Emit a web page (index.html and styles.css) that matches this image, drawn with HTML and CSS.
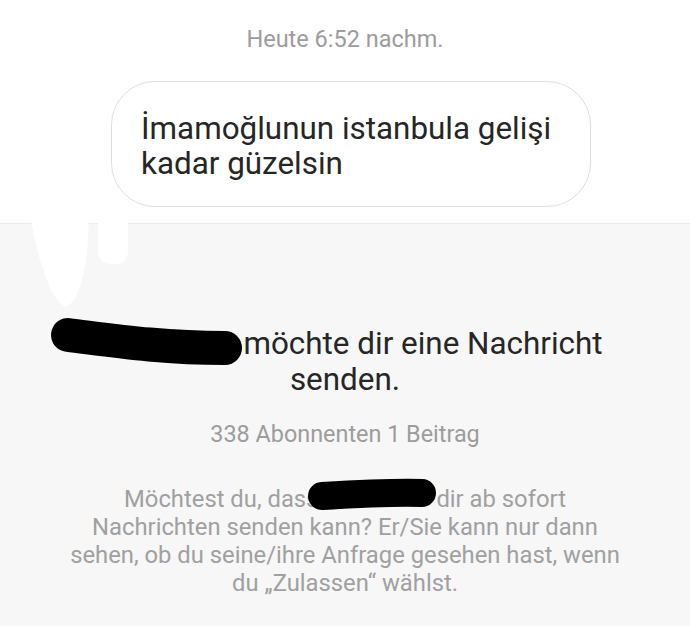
FILE: index.html
```html
<!DOCTYPE html>
<html>
	<head>
		<meta charset="UTF-8">
		<link rel="stylesheet" href="styles.css">
	</head>
	<body>
		<div class="thread">
			<div class="timestamp">Heute 6:52 nachm.</div>
			<div class="bubble">İmamoğlunun istanbula gelişi<br>kadar güzelsin</div>
		</div>

		<div class="request">
			<div class="requestTitle"><svg class="scribble nameScribble" width="196" height="30" viewBox="0 0 196 30"><path d="M19 11 C60 16 110 24 176 24" stroke="#000" stroke-width="34" stroke-linecap="round" fill="none"/></svg>möchte dir eine Nachricht<br>senden.</div>
			<div class="stats">338 Abonnenten 1 Beitrag</div>
			<div class="info">Möchtest du, dass<svg class="scribble infoScribble" width="132" height="20" viewBox="0 0 132 20"><path d="M16 9 C50 7 90 5 116 6" stroke="#000" stroke-width="28" stroke-linecap="round" fill="none"/></svg>dir ab sofort<br>Nachrichten senden kann? Er/Sie kann nur dann<br>sehen, ob du seine/ihre Anfrage gesehen hast, wenn<br>du „Zulassen“ wählst.</div>
		</div>

		<!-- white paint blot over the divider -->
		<svg class="blot" width="120" height="150" viewBox="0 0 120 150">
			<path d="M8 0 L70 0 L68 70 C66 100 60 130 46 137 C34 132 26 110 20 90 C14 70 8 40 8 0 Z" fill="#fff"/>
			<path d="M78 30 L108 30 L108 80 C108 92 100 94 93 94 C84 94 78 90 78 80 Z" fill="#fff"/>
		</svg>
	</body>
</html>
```

FILE: styles.css
```css
body {
	margin: 0;
	background-color: #f7f7f7;
	font-family: 'Roboto', sans-serif;
	position: relative;
}

.thread {
	background-color: #fff;
	height: 224px;
	border-bottom: 1px solid #ebebeb;
	padding-top: 25px;
	box-sizing: border-box;
}

.timestamp {
	text-align: center;
	color: #9c9c9c;
	font-size: 23.5px;
	line-height: 28px;
}

.bubble {
	margin: 28px 0 0 111px;
	width: 480px;
	height: 126px;
	box-sizing: border-box;
	border: 1.5px solid #dedede;
	border-radius: 44px;
	padding: 29px 0 0 29px;
	color: #262626;
	font-size: 31.4px;
	line-height: 35px;
}

.request {
	padding-top: 100px;
	text-align: center;
}

.requestTitle {
	color: #262626;
	font-size: 31.4px;
	line-height: 36px;
}

.stats {
	margin-top: 22px;
	color: #9c9c9c;
	font-size: 23.4px;
	line-height: 28px;
}

.info {
	margin-top: 37px;
	color: #a0a0a0;
	font-size: 23.8px;
	line-height: 28px;
}

.scribble {
	overflow: visible;
	vertical-align: baseline;
}

.nameScribble {
	margin: 0 -2px 0 -38px;
}

.infoScribble {
	margin: 0 -2px 0 -12px;
}

.blot {
	position: absolute;
	left: 20px;
	top: 170px;
}
```
